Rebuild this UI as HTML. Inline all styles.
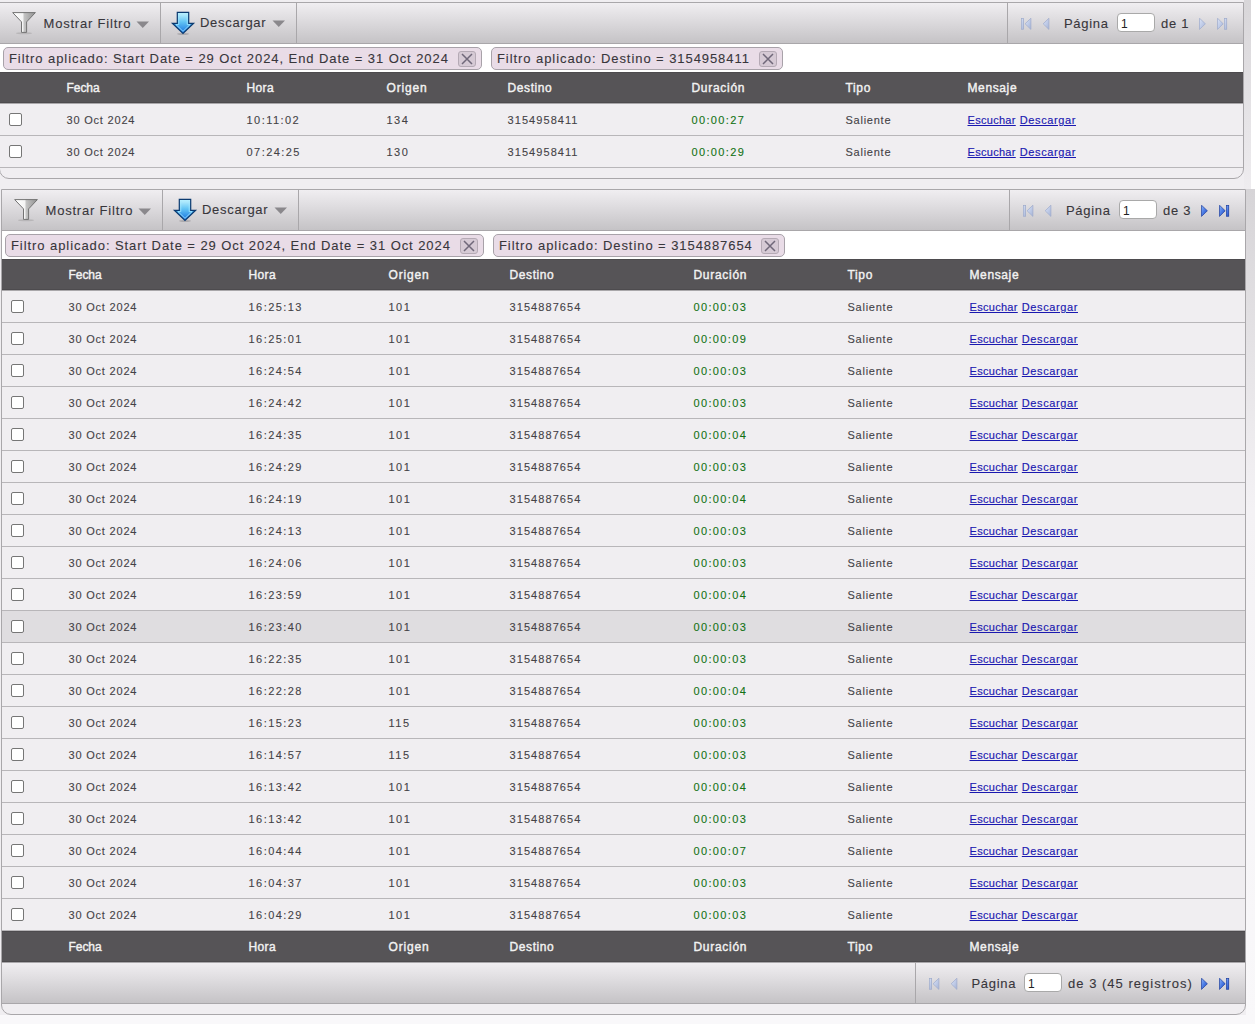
<!DOCTYPE html>
<html><head><meta charset="utf-8"><style>
html,body{margin:0;padding:0;}
body{width:1255px;height:1024px;overflow:hidden;position:relative;background:#f0eef1;font-family:"Liberation Sans", sans-serif;}
.grid{position:absolute;box-sizing:border-box;border:1px solid #a9a7aa;border-radius:0 0 10px 10px;background:#f0eef1;}
.tb{position:absolute;height:40px;border-bottom:1px solid #a9a7aa;background:linear-gradient(#f0eef1,#c5c3c6);}
.sep{position:absolute;width:1px;height:40px;background:#a9a7aa;}
.fa{position:absolute;height:28px;background:#fff;}
.tag{position:absolute;box-sizing:border-box;height:23px;border:1px solid #a8a2a9;border-radius:5px;background:#e9dce7;}
.xb{position:absolute;box-sizing:border-box;width:18px;height:16px;border:1px solid #b5aab5;border-radius:3px;background:#d6cad5;}
.xb svg{position:absolute;left:-1px;top:-1px;}
.hd{position:absolute;height:32px;background:#565457;border-top:1px solid #4d4b4e;border-bottom:1px solid #a9a7aa;box-shadow:inset 0 -1px #4d4b4e;box-sizing:border-box;}
.row{position:absolute;height:32px;box-sizing:border-box;background:#f0eef1;border-bottom:1px solid #b8b6b9;}
.row.hov{background:#dfdde0;}
.cb{position:absolute;box-sizing:border-box;width:13px;height:13px;border:1px solid #767676;border-radius:2px;background:#fff;}
.ic{position:absolute;}
.t{position:absolute;white-space:nowrap;height:0;}
.t::before{content:"";}
.tbt{font-size:13px;color:#38363b;-webkit-text-stroke:0.1px #38363b;letter-spacing:0.7px;}
.tagt{font-size:13px;color:#38363b;-webkit-text-stroke:0.1px #38363b;letter-spacing:0.93px;}
.ht{font-size:12px;font-weight:normal;color:#f2f2f2;letter-spacing:0.35px;-webkit-text-stroke:0.4px #f2f2f2;}
.rt{font-size:11px;color:#444246;margin-left:0.5px;-webkit-text-stroke:0.1px #444246;}
.lsF{letter-spacing:0.8px} .lsT{letter-spacing:1.45px} .lsO{letter-spacing:1.5px} .lsD{letter-spacing:1.07px} .lsS{letter-spacing:0.75px} .lsT.grn{letter-spacing:1.35px}
.grn{color:#127214;-webkit-text-stroke:0.1px #127214;}
.lnk u{color:#1a18b0;-webkit-text-stroke:0.15px #1a18b0;}
.lnk .e{letter-spacing:0.3px} .lnk .d{letter-spacing:0.6px}
.inp{position:absolute;box-sizing:border-box;width:38px;height:19px;border:1px solid #a9a9a9;border-radius:4px;background:#fff;}
.inp span{position:absolute;left:3px;top:1px;font-size:12px;line-height:19px;color:#222;}

.t{line-height:0;}
</style></head><body>
<div style="position:absolute;left:1244px;top:0;width:7px;height:189px;background:linear-gradient(#d8d6d9,#eeecef)"></div>
<div style="position:absolute;left:1251px;top:0;width:4px;height:189px;background:#ffffff"></div>
<div style="position:absolute;left:1246px;top:189px;width:9px;height:835px;background:linear-gradient(#d6d4d7,#f4f2f5 320px,#f9f8fa)"></div>
<div style="position:absolute;left:0;top:1015px;width:1246px;height:9px;background:#f9f8fa"></div>
<div class="grid" style="left:-1px;top:2px;width:1245px;height:177px"></div>
<div class="tb" style="left:0px;top:3px;width:1243px"></div>
<div class="sep" style="left:160px;top:3px"></div>
<div class="sep" style="left:296px;top:3px"></div>
<div class="sep" style="left:1007px;top:3px"></div>
<svg class="ic" style="left:8px;top:8px" width="32" height="32" viewBox="0 0 32 32">
<defs><linearGradient id="fg88" x1="0" x2="1" y1="0" y2="0"><stop offset="0" stop-color="#ffffff"/><stop offset="0.45" stop-color="#f4f4f4"/><stop offset="0.5" stop-color="#c4c4c4"/><stop offset="1" stop-color="#909090"/></linearGradient></defs>
<ellipse cx="16" cy="25.2" rx="8" ry="1" fill="#a8a6a9" opacity="0.6"/>
<path d="M4.7 4.6 L27.4 4.6 L18.6 13.9 L18.6 24.4 L13.5 24.4 L13.5 13.9 Z" fill="url(#fg88)" stroke="#737373" stroke-width="1.0" stroke-linejoin="miter"/>
</svg>
<div class="t tbt" style="left:43.5px;top:24px;letter-spacing:0.8px">Mostrar Filtro</div>
<svg class="ic" style="left:136px;top:21px" width="14" height="8" viewBox="0 0 14 8"><path d="M0.5 0.5 L13 0.5 L6.75 7 Z" fill="#8a888c"/></svg>
<svg class="ic" style="left:168px;top:8px" width="30" height="30" viewBox="0 0 30 30">
<defs><linearGradient id="ag1688" x1="0" x2="0" y1="0" y2="1"><stop offset="0" stop-color="#c8f6ff"/><stop offset="0.45" stop-color="#62c4f4"/><stop offset="1" stop-color="#1670e0"/></linearGradient></defs>
<ellipse cx="15" cy="26" rx="6" ry="0.9" fill="#8a888b" opacity="0.5"/>
<path d="M9.3 4.4 L20.7 4.4 L20.7 15.3 L25.6 15.3 L15 25.4 L4.4 15.3 L9.3 15.3 Z" fill="url(#ag1688)" stroke="#0b3a70" stroke-width="1.2" stroke-linejoin="miter"/>
<path d="M10.8 5.8 L19.2 5.8 L19.2 16.6 L22 16.6 L15 23.3 L8 16.6 L10.8 16.6 Z" fill="none" stroke="#a8ecff" stroke-width="0.9" opacity="0.8"/>
</svg>
<div class="t tbt" style="left:200px;top:23px;">Descargar</div>
<svg class="ic" style="left:272px;top:20px" width="14" height="8" viewBox="0 0 14 8"><path d="M0.5 0.5 L13 0.5 L6.75 7 Z" fill="#8a888c"/></svg>
<svg class="ic" style="left:1021px;top:18px" width="12" height="13" viewBox="0 0 12 13"><defs><linearGradient id="pd102118" x1="0" y1="0" x2="1" y2="1"><stop offset="0" stop-color="#dce4f6"/><stop offset="0.5" stop-color="#c0cce8"/><stop offset="1" stop-color="#a4b2d6"/></linearGradient></defs><rect x="0.35" y="0.35" width="2.3" height="10.9" fill="url(#pd102118)" stroke="#9eabcb" stroke-width="0.7"/><path d="M9.9 0.2 L9.9 11.4 L4.1 5.8 Z" fill="url(#pd102118)" stroke="#9eabcb" stroke-width="0.7" stroke-linejoin="round"/></svg><svg class="ic" style="left:1043px;top:18px" width="8" height="13" viewBox="0 0 8 13"><path d="M5.9 0.2 L5.9 11.4 L0.2 5.8 Z" fill="url(#pd102118)" stroke="#9eabcb" stroke-width="0.7" stroke-linejoin="round"/></svg>
<div class="t tbt" style="left:1064px;top:24px;">Página</div>
<div class="inp" style="left:1117px;top:13px"><span>1</span></div>
<div class="t tbt" style="left:1161px;top:24px;">de 1</div>
<svg class="ic" style="left:1199px;top:18px" width="8" height="13" viewBox="0 0 8 13"><defs><linearGradient id="pn119918" x1="0" y1="0" x2="1" y2="1"><stop offset="0" stop-color="#dce4f6"/><stop offset="0.5" stop-color="#c0cce8"/><stop offset="1" stop-color="#a4b2d6"/></linearGradient></defs><path d="M0.5 0.2 L0.5 11.4 L6.4 5.8 Z" fill="url(#pn119918)" stroke="#9eabcb" stroke-width="0.7" stroke-linejoin="round"/></svg><svg class="ic" style="left:1217px;top:18px" width="12" height="13" viewBox="0 0 12 13"><path d="M0.5 0.2 L0.5 11.4 L6.2 5.8 Z" fill="url(#pn119918)" stroke="#9eabcb" stroke-width="0.7" stroke-linejoin="round"/><rect x="7.35" y="0.35" width="2.4" height="10.9" fill="url(#pn119918)" stroke="#9eabcb" stroke-width="0.7"/></svg>
<div class="fa" style="left:0px;top:44px;width:1243px"></div>
<div class="tag" style="left:3px;top:47px;width:479px"></div>
<div class="t tagt" style="left:9px;top:59px;">Filtro aplicado: Start Date = 29 Oct 2024, End Date = 31 Oct 2024</div>
<div class="xb" style="left:458px;top:51px"><svg width="18" height="16" viewBox="0 0 18 16"><path d="M4 3 L14 13 M14 3 L4 13" stroke="#70687a" stroke-width="1.5"/></svg></div>
<div class="tag" style="left:491px;top:47px;width:292px"></div>
<div class="t tagt" style="left:497px;top:59px;">Filtro aplicado: Destino = 3154958411</div>
<div class="xb" style="left:759px;top:51px"><svg width="18" height="16" viewBox="0 0 18 16"><path d="M4 3 L14 13 M14 3 L4 13" stroke="#70687a" stroke-width="1.5"/></svg></div>
<div class="hd" style="left:0px;top:72px;width:1243px"></div>
<div class="t ht" style="left:66.5px;top:88px;letter-spacing:-0.05px">Fecha</div>
<div class="t ht" style="left:246.5px;top:88px;letter-spacing:0.35px">Hora</div>
<div class="t ht" style="left:386.5px;top:88px;letter-spacing:0.83px">Origen</div>
<div class="t ht" style="left:507.5px;top:88px;letter-spacing:0.6px">Destino</div>
<div class="t ht" style="left:691.5px;top:88px;letter-spacing:0.7px">Duración</div>
<div class="t ht" style="left:845.5px;top:88px;letter-spacing:0.65px">Tipo</div>
<div class="t ht" style="left:967.5px;top:88px;letter-spacing:0.62px">Mensaje</div>
<div class="row" style="left:0px;top:104px;width:1243px"></div>
<div class="cb" style="left:9px;top:113px"></div>
<div class="t rt lsF" style="left:66px;top:120px;">30 Oct 2024</div>
<div class="t rt lsT" style="left:246px;top:120px;">10:11:02</div>
<div class="t rt lsO" style="left:386px;top:120px;">134</div>
<div class="t rt lsD" style="left:507px;top:120px;">3154958411</div>
<div class="t rt lsT grn" style="left:691px;top:120px;">00:00:27</div>
<div class="t rt lsS" style="left:845px;top:120px;">Saliente</div>
<div class="t rt lnk" style="left:967px;top:120px"><u class="e">Escuchar</u> <u class="d" style="margin-left:1px">Descargar</u></div>
<div class="row" style="left:0px;top:136px;width:1243px"></div>
<div class="cb" style="left:9px;top:145px"></div>
<div class="t rt lsF" style="left:66px;top:152px;">30 Oct 2024</div>
<div class="t rt lsT" style="left:246px;top:152px;">07:24:25</div>
<div class="t rt lsO" style="left:386px;top:152px;">130</div>
<div class="t rt lsD" style="left:507px;top:152px;">3154958411</div>
<div class="t rt lsT grn" style="left:691px;top:152px;">00:00:29</div>
<div class="t rt lsS" style="left:845px;top:152px;">Saliente</div>
<div class="t rt lnk" style="left:967px;top:152px"><u class="e">Escuchar</u> <u class="d" style="margin-left:1px">Descargar</u></div>
<div class="grid" style="left:1px;top:189px;width:1245px;height:826px"></div>
<div class="tb" style="left:2px;top:190px;width:1243px"></div>
<div class="sep" style="left:162px;top:190px"></div>
<div class="sep" style="left:298px;top:190px"></div>
<div class="sep" style="left:1009px;top:190px"></div>
<svg class="ic" style="left:10px;top:195px" width="32" height="32" viewBox="0 0 32 32">
<defs><linearGradient id="fg10195" x1="0" x2="1" y1="0" y2="0"><stop offset="0" stop-color="#ffffff"/><stop offset="0.45" stop-color="#f4f4f4"/><stop offset="0.5" stop-color="#c4c4c4"/><stop offset="1" stop-color="#909090"/></linearGradient></defs>
<ellipse cx="16" cy="25.2" rx="8" ry="1" fill="#a8a6a9" opacity="0.6"/>
<path d="M4.7 4.6 L27.4 4.6 L18.6 13.9 L18.6 24.4 L13.5 24.4 L13.5 13.9 Z" fill="url(#fg10195)" stroke="#737373" stroke-width="1.0" stroke-linejoin="miter"/>
</svg>
<div class="t tbt" style="left:45.5px;top:211px;letter-spacing:0.8px">Mostrar Filtro</div>
<svg class="ic" style="left:138px;top:208px" width="14" height="8" viewBox="0 0 14 8"><path d="M0.5 0.5 L13 0.5 L6.75 7 Z" fill="#8a888c"/></svg>
<svg class="ic" style="left:170px;top:195px" width="30" height="30" viewBox="0 0 30 30">
<defs><linearGradient id="ag170195" x1="0" x2="0" y1="0" y2="1"><stop offset="0" stop-color="#c8f6ff"/><stop offset="0.45" stop-color="#62c4f4"/><stop offset="1" stop-color="#1670e0"/></linearGradient></defs>
<ellipse cx="15" cy="26" rx="6" ry="0.9" fill="#8a888b" opacity="0.5"/>
<path d="M9.3 4.4 L20.7 4.4 L20.7 15.3 L25.6 15.3 L15 25.4 L4.4 15.3 L9.3 15.3 Z" fill="url(#ag170195)" stroke="#0b3a70" stroke-width="1.2" stroke-linejoin="miter"/>
<path d="M10.8 5.8 L19.2 5.8 L19.2 16.6 L22 16.6 L15 23.3 L8 16.6 L10.8 16.6 Z" fill="none" stroke="#a8ecff" stroke-width="0.9" opacity="0.8"/>
</svg>
<div class="t tbt" style="left:202px;top:210px;">Descargar</div>
<svg class="ic" style="left:274px;top:207px" width="14" height="8" viewBox="0 0 14 8"><path d="M0.5 0.5 L13 0.5 L6.75 7 Z" fill="#8a888c"/></svg>
<svg class="ic" style="left:1023px;top:205px" width="12" height="13" viewBox="0 0 12 13"><defs><linearGradient id="pd1023205" x1="0" y1="0" x2="1" y2="1"><stop offset="0" stop-color="#dce4f6"/><stop offset="0.5" stop-color="#c0cce8"/><stop offset="1" stop-color="#a4b2d6"/></linearGradient></defs><rect x="0.35" y="0.35" width="2.3" height="10.9" fill="url(#pd1023205)" stroke="#9eabcb" stroke-width="0.7"/><path d="M9.9 0.2 L9.9 11.4 L4.1 5.8 Z" fill="url(#pd1023205)" stroke="#9eabcb" stroke-width="0.7" stroke-linejoin="round"/></svg><svg class="ic" style="left:1045px;top:205px" width="8" height="13" viewBox="0 0 8 13"><path d="M5.9 0.2 L5.9 11.4 L0.2 5.8 Z" fill="url(#pd1023205)" stroke="#9eabcb" stroke-width="0.7" stroke-linejoin="round"/></svg>
<div class="t tbt" style="left:1066px;top:211px;">Página</div>
<div class="inp" style="left:1119px;top:200px"><span>1</span></div>
<div class="t tbt" style="left:1163px;top:211px;">de 3</div>
<svg class="ic" style="left:1201px;top:205px" width="8" height="13" viewBox="0 0 8 13"><defs><linearGradient id="pn1201205" x1="0" y1="0" x2="1" y2="1"><stop offset="0" stop-color="#8ab4fa"/><stop offset="0.5" stop-color="#4a7ae4"/><stop offset="1" stop-color="#1d44b8"/></linearGradient></defs><path d="M0.5 0.2 L0.5 11.4 L6.4 5.8 Z" fill="url(#pn1201205)" stroke="#1f3f9e" stroke-width="0.7" stroke-linejoin="round"/></svg><svg class="ic" style="left:1219px;top:205px" width="12" height="13" viewBox="0 0 12 13"><path d="M0.5 0.2 L0.5 11.4 L6.2 5.8 Z" fill="url(#pn1201205)" stroke="#1f3f9e" stroke-width="0.7" stroke-linejoin="round"/><rect x="7.35" y="0.35" width="2.4" height="10.9" fill="url(#pn1201205)" stroke="#1f3f9e" stroke-width="0.7"/></svg>
<div class="fa" style="left:2px;top:231px;width:1243px"></div>
<div class="tag" style="left:5px;top:234px;width:479px"></div>
<div class="t tagt" style="left:11px;top:246px;">Filtro aplicado: Start Date = 29 Oct 2024, End Date = 31 Oct 2024</div>
<div class="xb" style="left:460px;top:238px"><svg width="18" height="16" viewBox="0 0 18 16"><path d="M4 3 L14 13 M14 3 L4 13" stroke="#70687a" stroke-width="1.5"/></svg></div>
<div class="tag" style="left:493px;top:234px;width:292px"></div>
<div class="t tagt" style="left:499px;top:246px;">Filtro aplicado: Destino = 3154887654</div>
<div class="xb" style="left:761px;top:238px"><svg width="18" height="16" viewBox="0 0 18 16"><path d="M4 3 L14 13 M14 3 L4 13" stroke="#70687a" stroke-width="1.5"/></svg></div>
<div class="hd" style="left:2px;top:259px;width:1243px"></div>
<div class="t ht" style="left:68.5px;top:275px;letter-spacing:-0.05px">Fecha</div>
<div class="t ht" style="left:248.5px;top:275px;letter-spacing:0.35px">Hora</div>
<div class="t ht" style="left:388.5px;top:275px;letter-spacing:0.83px">Origen</div>
<div class="t ht" style="left:509.5px;top:275px;letter-spacing:0.6px">Destino</div>
<div class="t ht" style="left:693.5px;top:275px;letter-spacing:0.7px">Duración</div>
<div class="t ht" style="left:847.5px;top:275px;letter-spacing:0.65px">Tipo</div>
<div class="t ht" style="left:969.5px;top:275px;letter-spacing:0.62px">Mensaje</div>
<div class="row" style="left:2px;top:291px;width:1243px"></div>
<div class="cb" style="left:11px;top:300px"></div>
<div class="t rt lsF" style="left:68px;top:307px;">30 Oct 2024</div>
<div class="t rt lsT" style="left:248px;top:307px;">16:25:13</div>
<div class="t rt lsO" style="left:388px;top:307px;">101</div>
<div class="t rt lsD" style="left:509px;top:307px;">3154887654</div>
<div class="t rt lsT grn" style="left:693px;top:307px;">00:00:03</div>
<div class="t rt lsS" style="left:847px;top:307px;">Saliente</div>
<div class="t rt lnk" style="left:969px;top:307px"><u class="e">Escuchar</u> <u class="d" style="margin-left:1px">Descargar</u></div>
<div class="row" style="left:2px;top:323px;width:1243px"></div>
<div class="cb" style="left:11px;top:332px"></div>
<div class="t rt lsF" style="left:68px;top:339px;">30 Oct 2024</div>
<div class="t rt lsT" style="left:248px;top:339px;">16:25:01</div>
<div class="t rt lsO" style="left:388px;top:339px;">101</div>
<div class="t rt lsD" style="left:509px;top:339px;">3154887654</div>
<div class="t rt lsT grn" style="left:693px;top:339px;">00:00:09</div>
<div class="t rt lsS" style="left:847px;top:339px;">Saliente</div>
<div class="t rt lnk" style="left:969px;top:339px"><u class="e">Escuchar</u> <u class="d" style="margin-left:1px">Descargar</u></div>
<div class="row" style="left:2px;top:355px;width:1243px"></div>
<div class="cb" style="left:11px;top:364px"></div>
<div class="t rt lsF" style="left:68px;top:371px;">30 Oct 2024</div>
<div class="t rt lsT" style="left:248px;top:371px;">16:24:54</div>
<div class="t rt lsO" style="left:388px;top:371px;">101</div>
<div class="t rt lsD" style="left:509px;top:371px;">3154887654</div>
<div class="t rt lsT grn" style="left:693px;top:371px;">00:00:03</div>
<div class="t rt lsS" style="left:847px;top:371px;">Saliente</div>
<div class="t rt lnk" style="left:969px;top:371px"><u class="e">Escuchar</u> <u class="d" style="margin-left:1px">Descargar</u></div>
<div class="row" style="left:2px;top:387px;width:1243px"></div>
<div class="cb" style="left:11px;top:396px"></div>
<div class="t rt lsF" style="left:68px;top:403px;">30 Oct 2024</div>
<div class="t rt lsT" style="left:248px;top:403px;">16:24:42</div>
<div class="t rt lsO" style="left:388px;top:403px;">101</div>
<div class="t rt lsD" style="left:509px;top:403px;">3154887654</div>
<div class="t rt lsT grn" style="left:693px;top:403px;">00:00:03</div>
<div class="t rt lsS" style="left:847px;top:403px;">Saliente</div>
<div class="t rt lnk" style="left:969px;top:403px"><u class="e">Escuchar</u> <u class="d" style="margin-left:1px">Descargar</u></div>
<div class="row" style="left:2px;top:419px;width:1243px"></div>
<div class="cb" style="left:11px;top:428px"></div>
<div class="t rt lsF" style="left:68px;top:435px;">30 Oct 2024</div>
<div class="t rt lsT" style="left:248px;top:435px;">16:24:35</div>
<div class="t rt lsO" style="left:388px;top:435px;">101</div>
<div class="t rt lsD" style="left:509px;top:435px;">3154887654</div>
<div class="t rt lsT grn" style="left:693px;top:435px;">00:00:04</div>
<div class="t rt lsS" style="left:847px;top:435px;">Saliente</div>
<div class="t rt lnk" style="left:969px;top:435px"><u class="e">Escuchar</u> <u class="d" style="margin-left:1px">Descargar</u></div>
<div class="row" style="left:2px;top:451px;width:1243px"></div>
<div class="cb" style="left:11px;top:460px"></div>
<div class="t rt lsF" style="left:68px;top:467px;">30 Oct 2024</div>
<div class="t rt lsT" style="left:248px;top:467px;">16:24:29</div>
<div class="t rt lsO" style="left:388px;top:467px;">101</div>
<div class="t rt lsD" style="left:509px;top:467px;">3154887654</div>
<div class="t rt lsT grn" style="left:693px;top:467px;">00:00:03</div>
<div class="t rt lsS" style="left:847px;top:467px;">Saliente</div>
<div class="t rt lnk" style="left:969px;top:467px"><u class="e">Escuchar</u> <u class="d" style="margin-left:1px">Descargar</u></div>
<div class="row" style="left:2px;top:483px;width:1243px"></div>
<div class="cb" style="left:11px;top:492px"></div>
<div class="t rt lsF" style="left:68px;top:499px;">30 Oct 2024</div>
<div class="t rt lsT" style="left:248px;top:499px;">16:24:19</div>
<div class="t rt lsO" style="left:388px;top:499px;">101</div>
<div class="t rt lsD" style="left:509px;top:499px;">3154887654</div>
<div class="t rt lsT grn" style="left:693px;top:499px;">00:00:04</div>
<div class="t rt lsS" style="left:847px;top:499px;">Saliente</div>
<div class="t rt lnk" style="left:969px;top:499px"><u class="e">Escuchar</u> <u class="d" style="margin-left:1px">Descargar</u></div>
<div class="row" style="left:2px;top:515px;width:1243px"></div>
<div class="cb" style="left:11px;top:524px"></div>
<div class="t rt lsF" style="left:68px;top:531px;">30 Oct 2024</div>
<div class="t rt lsT" style="left:248px;top:531px;">16:24:13</div>
<div class="t rt lsO" style="left:388px;top:531px;">101</div>
<div class="t rt lsD" style="left:509px;top:531px;">3154887654</div>
<div class="t rt lsT grn" style="left:693px;top:531px;">00:00:03</div>
<div class="t rt lsS" style="left:847px;top:531px;">Saliente</div>
<div class="t rt lnk" style="left:969px;top:531px"><u class="e">Escuchar</u> <u class="d" style="margin-left:1px">Descargar</u></div>
<div class="row" style="left:2px;top:547px;width:1243px"></div>
<div class="cb" style="left:11px;top:556px"></div>
<div class="t rt lsF" style="left:68px;top:563px;">30 Oct 2024</div>
<div class="t rt lsT" style="left:248px;top:563px;">16:24:06</div>
<div class="t rt lsO" style="left:388px;top:563px;">101</div>
<div class="t rt lsD" style="left:509px;top:563px;">3154887654</div>
<div class="t rt lsT grn" style="left:693px;top:563px;">00:00:03</div>
<div class="t rt lsS" style="left:847px;top:563px;">Saliente</div>
<div class="t rt lnk" style="left:969px;top:563px"><u class="e">Escuchar</u> <u class="d" style="margin-left:1px">Descargar</u></div>
<div class="row" style="left:2px;top:579px;width:1243px"></div>
<div class="cb" style="left:11px;top:588px"></div>
<div class="t rt lsF" style="left:68px;top:595px;">30 Oct 2024</div>
<div class="t rt lsT" style="left:248px;top:595px;">16:23:59</div>
<div class="t rt lsO" style="left:388px;top:595px;">101</div>
<div class="t rt lsD" style="left:509px;top:595px;">3154887654</div>
<div class="t rt lsT grn" style="left:693px;top:595px;">00:00:04</div>
<div class="t rt lsS" style="left:847px;top:595px;">Saliente</div>
<div class="t rt lnk" style="left:969px;top:595px"><u class="e">Escuchar</u> <u class="d" style="margin-left:1px">Descargar</u></div>
<div class="row hov" style="left:2px;top:611px;width:1243px"></div>
<div class="cb" style="left:11px;top:620px"></div>
<div class="t rt lsF" style="left:68px;top:627px;">30 Oct 2024</div>
<div class="t rt lsT" style="left:248px;top:627px;">16:23:40</div>
<div class="t rt lsO" style="left:388px;top:627px;">101</div>
<div class="t rt lsD" style="left:509px;top:627px;">3154887654</div>
<div class="t rt lsT grn" style="left:693px;top:627px;">00:00:03</div>
<div class="t rt lsS" style="left:847px;top:627px;">Saliente</div>
<div class="t rt lnk" style="left:969px;top:627px"><u class="e">Escuchar</u> <u class="d" style="margin-left:1px">Descargar</u></div>
<div class="row" style="left:2px;top:643px;width:1243px"></div>
<div class="cb" style="left:11px;top:652px"></div>
<div class="t rt lsF" style="left:68px;top:659px;">30 Oct 2024</div>
<div class="t rt lsT" style="left:248px;top:659px;">16:22:35</div>
<div class="t rt lsO" style="left:388px;top:659px;">101</div>
<div class="t rt lsD" style="left:509px;top:659px;">3154887654</div>
<div class="t rt lsT grn" style="left:693px;top:659px;">00:00:03</div>
<div class="t rt lsS" style="left:847px;top:659px;">Saliente</div>
<div class="t rt lnk" style="left:969px;top:659px"><u class="e">Escuchar</u> <u class="d" style="margin-left:1px">Descargar</u></div>
<div class="row" style="left:2px;top:675px;width:1243px"></div>
<div class="cb" style="left:11px;top:684px"></div>
<div class="t rt lsF" style="left:68px;top:691px;">30 Oct 2024</div>
<div class="t rt lsT" style="left:248px;top:691px;">16:22:28</div>
<div class="t rt lsO" style="left:388px;top:691px;">101</div>
<div class="t rt lsD" style="left:509px;top:691px;">3154887654</div>
<div class="t rt lsT grn" style="left:693px;top:691px;">00:00:04</div>
<div class="t rt lsS" style="left:847px;top:691px;">Saliente</div>
<div class="t rt lnk" style="left:969px;top:691px"><u class="e">Escuchar</u> <u class="d" style="margin-left:1px">Descargar</u></div>
<div class="row" style="left:2px;top:707px;width:1243px"></div>
<div class="cb" style="left:11px;top:716px"></div>
<div class="t rt lsF" style="left:68px;top:723px;">30 Oct 2024</div>
<div class="t rt lsT" style="left:248px;top:723px;">16:15:23</div>
<div class="t rt lsO" style="left:388px;top:723px;">115</div>
<div class="t rt lsD" style="left:509px;top:723px;">3154887654</div>
<div class="t rt lsT grn" style="left:693px;top:723px;">00:00:03</div>
<div class="t rt lsS" style="left:847px;top:723px;">Saliente</div>
<div class="t rt lnk" style="left:969px;top:723px"><u class="e">Escuchar</u> <u class="d" style="margin-left:1px">Descargar</u></div>
<div class="row" style="left:2px;top:739px;width:1243px"></div>
<div class="cb" style="left:11px;top:748px"></div>
<div class="t rt lsF" style="left:68px;top:755px;">30 Oct 2024</div>
<div class="t rt lsT" style="left:248px;top:755px;">16:14:57</div>
<div class="t rt lsO" style="left:388px;top:755px;">115</div>
<div class="t rt lsD" style="left:509px;top:755px;">3154887654</div>
<div class="t rt lsT grn" style="left:693px;top:755px;">00:00:03</div>
<div class="t rt lsS" style="left:847px;top:755px;">Saliente</div>
<div class="t rt lnk" style="left:969px;top:755px"><u class="e">Escuchar</u> <u class="d" style="margin-left:1px">Descargar</u></div>
<div class="row" style="left:2px;top:771px;width:1243px"></div>
<div class="cb" style="left:11px;top:780px"></div>
<div class="t rt lsF" style="left:68px;top:787px;">30 Oct 2024</div>
<div class="t rt lsT" style="left:248px;top:787px;">16:13:42</div>
<div class="t rt lsO" style="left:388px;top:787px;">101</div>
<div class="t rt lsD" style="left:509px;top:787px;">3154887654</div>
<div class="t rt lsT grn" style="left:693px;top:787px;">00:00:04</div>
<div class="t rt lsS" style="left:847px;top:787px;">Saliente</div>
<div class="t rt lnk" style="left:969px;top:787px"><u class="e">Escuchar</u> <u class="d" style="margin-left:1px">Descargar</u></div>
<div class="row" style="left:2px;top:803px;width:1243px"></div>
<div class="cb" style="left:11px;top:812px"></div>
<div class="t rt lsF" style="left:68px;top:819px;">30 Oct 2024</div>
<div class="t rt lsT" style="left:248px;top:819px;">16:13:42</div>
<div class="t rt lsO" style="left:388px;top:819px;">101</div>
<div class="t rt lsD" style="left:509px;top:819px;">3154887654</div>
<div class="t rt lsT grn" style="left:693px;top:819px;">00:00:03</div>
<div class="t rt lsS" style="left:847px;top:819px;">Saliente</div>
<div class="t rt lnk" style="left:969px;top:819px"><u class="e">Escuchar</u> <u class="d" style="margin-left:1px">Descargar</u></div>
<div class="row" style="left:2px;top:835px;width:1243px"></div>
<div class="cb" style="left:11px;top:844px"></div>
<div class="t rt lsF" style="left:68px;top:851px;">30 Oct 2024</div>
<div class="t rt lsT" style="left:248px;top:851px;">16:04:44</div>
<div class="t rt lsO" style="left:388px;top:851px;">101</div>
<div class="t rt lsD" style="left:509px;top:851px;">3154887654</div>
<div class="t rt lsT grn" style="left:693px;top:851px;">00:00:07</div>
<div class="t rt lsS" style="left:847px;top:851px;">Saliente</div>
<div class="t rt lnk" style="left:969px;top:851px"><u class="e">Escuchar</u> <u class="d" style="margin-left:1px">Descargar</u></div>
<div class="row" style="left:2px;top:867px;width:1243px"></div>
<div class="cb" style="left:11px;top:876px"></div>
<div class="t rt lsF" style="left:68px;top:883px;">30 Oct 2024</div>
<div class="t rt lsT" style="left:248px;top:883px;">16:04:37</div>
<div class="t rt lsO" style="left:388px;top:883px;">101</div>
<div class="t rt lsD" style="left:509px;top:883px;">3154887654</div>
<div class="t rt lsT grn" style="left:693px;top:883px;">00:00:03</div>
<div class="t rt lsS" style="left:847px;top:883px;">Saliente</div>
<div class="t rt lnk" style="left:969px;top:883px"><u class="e">Escuchar</u> <u class="d" style="margin-left:1px">Descargar</u></div>
<div class="row" style="left:2px;top:899px;width:1243px"></div>
<div class="cb" style="left:11px;top:908px"></div>
<div class="t rt lsF" style="left:68px;top:915px;">30 Oct 2024</div>
<div class="t rt lsT" style="left:248px;top:915px;">16:04:29</div>
<div class="t rt lsO" style="left:388px;top:915px;">101</div>
<div class="t rt lsD" style="left:509px;top:915px;">3154887654</div>
<div class="t rt lsT grn" style="left:693px;top:915px;">00:00:03</div>
<div class="t rt lsS" style="left:847px;top:915px;">Saliente</div>
<div class="t rt lnk" style="left:969px;top:915px"><u class="e">Escuchar</u> <u class="d" style="margin-left:1px">Descargar</u></div>
<div class="hd" style="left:2px;top:931px;width:1243px"></div>
<div class="t ht" style="left:68.5px;top:947px;letter-spacing:-0.05px">Fecha</div>
<div class="t ht" style="left:248.5px;top:947px;letter-spacing:0.35px">Hora</div>
<div class="t ht" style="left:388.5px;top:947px;letter-spacing:0.83px">Origen</div>
<div class="t ht" style="left:509.5px;top:947px;letter-spacing:0.6px">Destino</div>
<div class="t ht" style="left:693.5px;top:947px;letter-spacing:0.7px">Duración</div>
<div class="t ht" style="left:847.5px;top:947px;letter-spacing:0.65px">Tipo</div>
<div class="t ht" style="left:969.5px;top:947px;letter-spacing:0.62px">Mensaje</div>
<div class="tb pg" style="left:2px;top:963px;width:1243px;height:40px"></div>
<div class="sep" style="left:915px;top:963px;height:40px"></div>
<svg class="ic" style="left:929px;top:978px" width="12" height="13" viewBox="0 0 12 13"><defs><linearGradient id="pd929978" x1="0" y1="0" x2="1" y2="1"><stop offset="0" stop-color="#dce4f6"/><stop offset="0.5" stop-color="#c0cce8"/><stop offset="1" stop-color="#a4b2d6"/></linearGradient></defs><rect x="0.35" y="0.35" width="2.3" height="10.9" fill="url(#pd929978)" stroke="#9eabcb" stroke-width="0.7"/><path d="M9.9 0.2 L9.9 11.4 L4.1 5.8 Z" fill="url(#pd929978)" stroke="#9eabcb" stroke-width="0.7" stroke-linejoin="round"/></svg><svg class="ic" style="left:951px;top:978px" width="8" height="13" viewBox="0 0 8 13"><path d="M5.9 0.2 L5.9 11.4 L0.2 5.8 Z" fill="url(#pd929978)" stroke="#9eabcb" stroke-width="0.7" stroke-linejoin="round"/></svg>
<div class="t tbt" style="left:971.5px;top:984px;">Página</div>
<div class="inp" style="left:1024px;top:973px"><span>1</span></div>
<div class="t tbt" style="left:1068px;top:984px;letter-spacing:1.02px">de 3 (45 registros)</div>
<svg class="ic" style="left:1201px;top:978px" width="8" height="13" viewBox="0 0 8 13"><defs><linearGradient id="pn1201978" x1="0" y1="0" x2="1" y2="1"><stop offset="0" stop-color="#8ab4fa"/><stop offset="0.5" stop-color="#4a7ae4"/><stop offset="1" stop-color="#1d44b8"/></linearGradient></defs><path d="M0.5 0.2 L0.5 11.4 L6.4 5.8 Z" fill="url(#pn1201978)" stroke="#1f3f9e" stroke-width="0.7" stroke-linejoin="round"/></svg><svg class="ic" style="left:1219px;top:978px" width="12" height="13" viewBox="0 0 12 13"><path d="M0.5 0.2 L0.5 11.4 L6.2 5.8 Z" fill="url(#pn1201978)" stroke="#1f3f9e" stroke-width="0.7" stroke-linejoin="round"/><rect x="7.35" y="0.35" width="2.4" height="10.9" fill="url(#pn1201978)" stroke="#1f3f9e" stroke-width="0.7"/></svg>
</body></html>
